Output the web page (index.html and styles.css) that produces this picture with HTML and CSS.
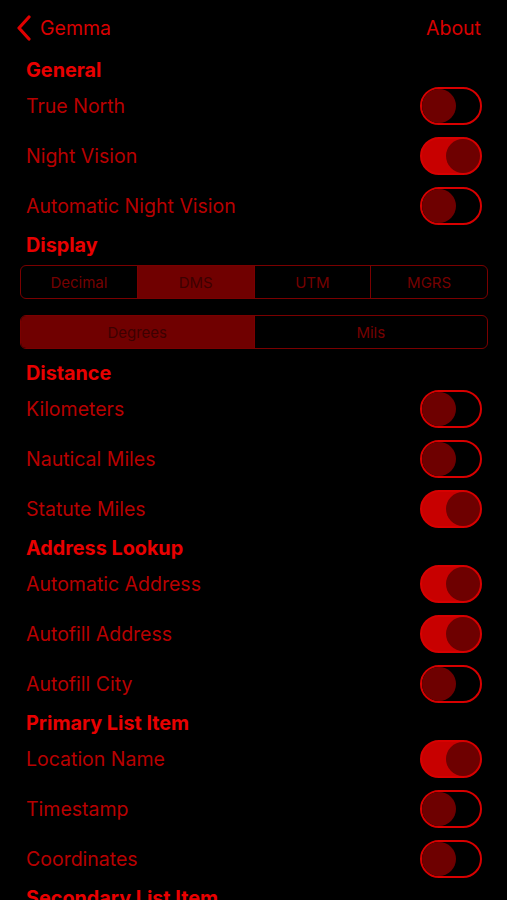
FILE: index.html
```html
<!DOCTYPE html>
<html lang="en">
  <head>
    <meta charset="UTF-8" />
    <meta name="viewport" content="width=device-width, initial-scale=1.0" />
    <title>Settings</title>
    <link rel="stylesheet" href="styles.css">
  </head>
  <body>
    <div class="nav">
      <a class="back" href="#">
        <svg width="16" height="26" viewBox="0 0 16 26">
          <path d="M13 2 L3 13 L13 24" fill="none" stroke="#e00000" stroke-width="3.2" stroke-linecap="round" stroke-linejoin="round" />
        </svg>
        <span>Gemma</span>
      </a>
      <a class="about" href="#">About</a>
    </div>

    <h2 class="section">General</h2>
    <div class="row"><span>True North</span><span class="toggle"></span></div>
    <div class="row"><span>Night Vision</span><span class="toggle on"></span></div>
    <div class="row"><span>Automatic Night Vision</span><span class="toggle"></span></div>

    <h2 class="section">Display</h2>
    <div class="segments first">
      <span>Decimal</span>
      <span class="selected">DMS</span>
      <span>UTM</span>
      <span>MGRS</span>
    </div>
    <div class="segments last">
      <span class="selected">Degrees</span>
      <span>Mils</span>
    </div>

    <h2 class="section">Distance</h2>
    <div class="row"><span>Kilometers</span><span class="toggle"></span></div>
    <div class="row"><span>Nautical Miles</span><span class="toggle"></span></div>
    <div class="row"><span>Statute Miles</span><span class="toggle on"></span></div>

    <h2 class="section">Address Lookup</h2>
    <div class="row"><span>Automatic Address</span><span class="toggle on"></span></div>
    <div class="row"><span>Autofill Address</span><span class="toggle on"></span></div>
    <div class="row"><span>Autofill City</span><span class="toggle"></span></div>

    <h2 class="section">Primary List Item</h2>
    <div class="row"><span>Location Name</span><span class="toggle on"></span></div>
    <div class="row"><span>Timestamp</span><span class="toggle"></span></div>
    <div class="row"><span>Coordinates</span><span class="toggle"></span></div>

    <h2 class="section">Secondary List Item</h2>
    <div class="row"><span>Location Name</span><span class="toggle"></span></div>
  </body>
</html>
```

FILE: styles.css
```css
* {
  margin: 0;
  padding: 0;
  box-sizing: border-box;
  font-family: Inter, "Liberation Sans", Arial, sans-serif;
}
html,
body {
  background: #000;
}
body {
  width: 507px;
  height: 900px;
  overflow: hidden;
  padding: 0 25px 0 26px;
}
.nav {
  height: 56px;
  display: flex;
  align-items: center;
  justify-content: space-between;
  margin-left: -10px;
  margin-right: 1px;
}
.nav a {
  color: #d80000;
  text-decoration: none;
  font-size: 19.5px;
}
.back {
  display: flex;
  align-items: center;
  gap: 8px;
}
.section {
  height: 25px;
  display: flex;
  align-items: center;
  padding-top: 2px;
  color: #e80000;
  font-size: 19.8px;
  font-weight: 700;
}
.row {
  height: 50px;
  display: flex;
  align-items: center;
  justify-content: space-between;
  color: #b80000;
  font-size: 19.5px;
}
.toggle {
  width: 62px;
  height: 38px;
  border: 2px solid #d80000;
  border-radius: 19px;
  display: flex;
  align-items: center;
  justify-content: flex-start;
}
.toggle::after {
  content: "";
  width: 34px;
  height: 34px;
  border-radius: 50%;
  background: #6e0000;
}
.toggle.on {
  background: #c80000;
  justify-content: flex-end;
}
.segments {
  display: flex;
  height: 34px;
  margin: 0 -6px 16px -6px;
  border: 1.5px solid #7a0000;
  border-radius: 6px;
  overflow: hidden;
}
.segments.first {
  margin-top: 9px;
}
.segments.last {
  margin-bottom: 10px;
}
.segments span {
  flex: 1;
  display: flex;
  align-items: center;
  justify-content: center;
  color: #760000;
  font-size: 15px;
  border-left: 1.5px solid #7a0000;
}
.segments span:first-child {
  border-left: none;
}
.segments .selected {
  background: #700000;
  color: #3c0000;
}
```
